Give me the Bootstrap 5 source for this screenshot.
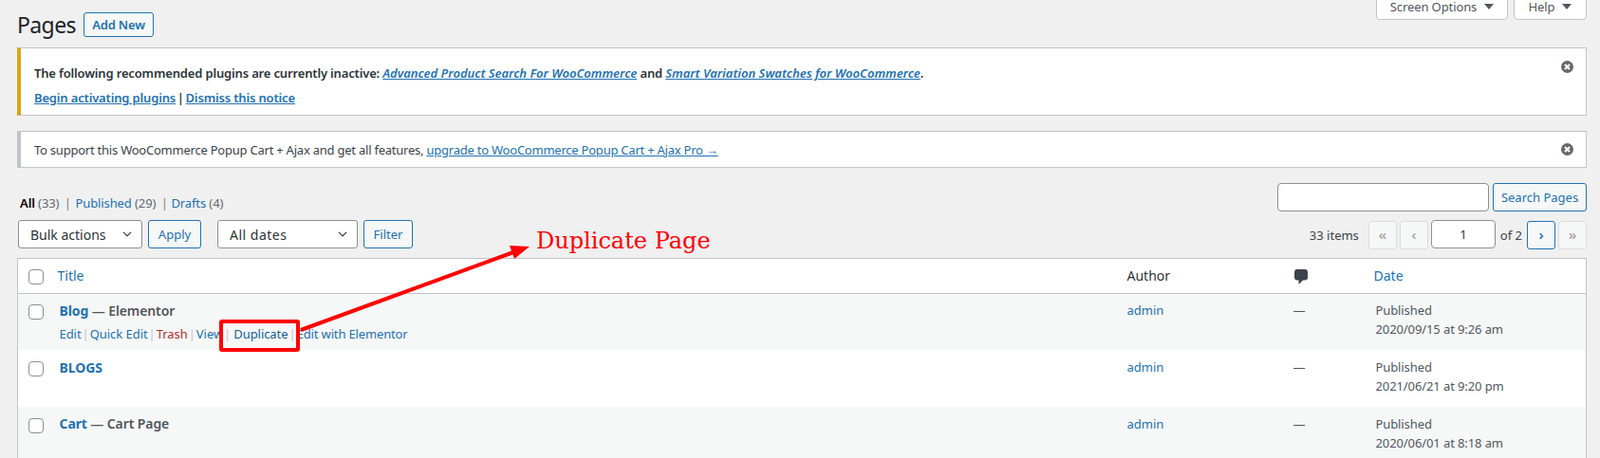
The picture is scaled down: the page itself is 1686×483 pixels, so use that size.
<!DOCTYPE html>
<html lang="en">
<head>
<meta charset="utf-8">
<title>Pages</title>
<link rel="stylesheet" href="https://cdn.jsdelivr.net/npm/bootstrap@5.3.0/dist/css/bootstrap.min.css">
<style>
html,body{height:483px;overflow:hidden}
body{background:#f0f0f1;color:#3c434a;font-family:"Noto Sans",sans-serif;font-size:13px;line-height:20px;position:relative}
a{color:#2271b1;text-decoration:none}
.wp-wrap{padding:0 14px 0 18px;width:1686px}
.wp-head{height:50px;padding-top:13px}
.wp-title{font-size:23px;font-weight:400;line-height:26px;margin:0 10px 0 0;color:#1d2327;width:60px;letter-spacing:-.6px}
.wp-btn{--bs-btn-padding-x:0;--bs-btn-padding-y:0;--bs-btn-font-size:13px;--bs-btn-line-height:28px;--bs-btn-color:#2271b1;--bs-btn-bg:#f6f7f7;--bs-btn-border-color:#2271b1;--bs-btn-border-radius:3px;height:30px;text-align:center}
.wp-add{width:74px;height:26px;line-height:24px;font-weight:600;letter-spacing:-.2px}
.wp-tabs{margin-top:-20px;margin-left:auto}
.wp-tab{background:#fff;border:1px solid #c3c4c7;border-radius:0 0 4px 4px;height:28px;line-height:26px;text-align:center;color:#50575e;letter-spacing:-.1px}
.wp-tab i{display:inline-block;border-left:5px solid transparent;border-right:5px solid transparent;border-top:6px solid #50575e;margin-left:8px;vertical-align:2px}
.wp-tab-a{width:139px}.wp-tab-b{width:77px;margin-left:6px}
.wp-notice{background:#fff;border:1px solid #c3c4c7;border-left-width:4px;padding:0 14px;position:relative}
.wp-n1{height:72px;border-left-color:#dba617;margin-bottom:16px;font-weight:600;padding-top:16px;color:#2c3338;letter-spacing:-.16px}
.wp-n1 p{margin:0 0 6px}
.wp-n1 a{text-decoration:underline}
.wp-n1 em{letter-spacing:0}
.wp-n1 .wp-bar{margin:0 -1.5px}
.wp-n2{height:39px;border-left-color:#c3c4c7;padding-top:9px;margin-bottom:16px;letter-spacing:-.23px}
.wp-n2 a{text-decoration:underline}
.wp-x{position:absolute;right:13px;top:13px;width:13px;height:13px;display:block}
.wp-n2 .wp-x{top:12px}
.wp-search{height:30px;margin-bottom:9px}
.wp-subs{margin:11px 0 0 3px;padding:0;list-style:none;color:#646970;letter-spacing:-.1px}
.wp-subs b{color:#000;font-weight:600}
.wp-subs em{font-style:normal;color:#787c82;margin:0 4.500px 0 5.500px}
.wp-subs li:nth-child(2) em{margin-right:3.500px}
.wp-input{width:223px;height:30px;border:1px solid #8c8f94;border-radius:4px;background:#fff;margin-right:4px;padding:0 8px}
.wp-sbtn{width:99px}
.wp-nav{height:31px;margin-bottom:9px}
.wp-sel{height:30px;padding:1px 24px 0 12px;font-size:14px;line-height:28px;color:#2c3338;border-color:#8c8f94;border-radius:3px;background-position:right 8px center;background-size:14px 10px;font-family:inherit}
.wp-sel-a{width:131px;margin:0 6px 0 1px}
.wp-sel-b{width:148px;margin:0 6px 0 17px;letter-spacing:.5px}
.wp-apply{width:56px}.wp-filter{width:52px}
.wp-count{margin-right:10px;margin-top:1px;line-height:30px}
.wp-pg{width:30px;height:30px;margin-top:1px;line-height:27px;border-radius:3px;border:1px solid #dcdcde;background:#f6f7f7;color:#a7aaad;text-align:center;font-size:15px;font-weight:600}
.wp-pg-on{border-color:#2271b1;color:#2271b1}
.wp-pg+.wp-pg{margin-left:3px}
.wp-page{width:68px;height:30px;border:1px solid #8c8f94;border-radius:4px;text-align:center;margin:0 5px 0 3px;background:#fff;color:#2c3338;font:inherit}
.wp-of{margin-right:5px;margin-top:1px;line-height:30px}
.wp-list{--bs-table-bg:transparent;--bs-table-striped-bg:#f6f7f7;--bs-table-striped-color:#50575e;--bs-table-color:#50575e;table-layout:fixed;width:1654px;margin:0;border:1px solid #c3c4c7;background:#fff;font-size:13px}
.wp-list th,.wp-list td{border:0;font-weight:400;vertical-align:top;box-shadow:none}
.wp-list thead th{height:37px;padding:8px 8px;border-bottom:1px solid #c3c4c7;font-size:14px;color:#2c3338}
.wp-list thead th.wp-ci{padding-left:9px}
.wp-list tbody tr:nth-child(odd) td{background-color:#f6f7f7}
.wp-list tbody td{height:60px;padding:8px 10px}
.wp-list tbody tr:first-child td{height:59px;padding-bottom:0}
.wp-list tbody td.wp-tc{padding:7px 8px 0}
.wp-list tbody td.wp-dc{padding-top:7px;padding-bottom:0;letter-spacing:-.1px}
.wp-list .wp-cbc{padding:11px 0 0 11px}
.wp-list tbody .wp-cbc{padding:11px 0 0 11px}
.wp-list tbody tr+tr td{padding-top:9px}
.wp-list tbody tr+tr td.wp-tc,.wp-list tbody tr+tr td.wp-dc{padding-top:8px}
.wp-list tbody tr+tr td.wp-cbc{padding-top:12px}
.wp-list tbody tr+tr+tr td.wp-tt{padding-top:8px}
.wp-list .form-check-input{width:16px;height:16px;margin:0;border:1px solid #8c8f94;border-radius:4px;display:block}
.wp-ttl{font-size:14px;font-weight:600;letter-spacing:-.1px}
.wp-ttl a{font-weight:700}
.wp-acts{font-size:13px;margin-top:4px;color:#c3c4c7;letter-spacing:-.05px}
.wp-acts span{margin:0 1px}
.wp-acts a.wp-del{color:#b32d2e}
.wp-acts a.wp-dup{color:#135e96;margin-left:2px}
.wp-acts a.wp-ele{letter-spacing:-.15px}
.wp-over{position:absolute;left:0;top:0;pointer-events:none}
.wp-over text{font-family:"DejaVu Serif",serif;font-size:24px;fill:#f00}
</style>
</head>
<body>
<div class="wp-wrap">
  <div class="wp-head d-flex align-items-start">
    <h1 class="wp-title">Pages</h1>
    <a href="#" class="btn wp-btn wp-add">Add New</a>
    <div class="wp-tabs d-flex">
      <div class="wp-tab wp-tab-a">Screen Options<i></i></div>
      <div class="wp-tab wp-tab-b">Help<i></i></div>
    </div>
  </div>

  <div class="wp-notice wp-n1">
    <p>The following recommended plugins are currently inactive: <a href="#"><em>Advanced Product Search For WooCommerce</em></a> and <a href="#"><em>Smart Variation Swatches for WooCommerce</em></a>.</p>
    <p><a href="#">Begin activating plugins</a> <span class="wp-bar">|</span> <a href="#">Dismiss this notice</a></p>
    <svg class="wp-x" viewBox="0 0 13 13" aria-hidden="true"><circle cx="6.5" cy="6.5" r="6.5" fill="#646970"/><path d="M4 4l5 5M9 4l-5 5" stroke="#fff" stroke-width="2.2"/></svg>
  </div>
  <div class="wp-notice wp-n2">
    To support this WooCommerce Popup Cart + Ajax and get all features, <a href="#">upgrade to WooCommerce Popup Cart + Ajax Pro →</a>
    <svg class="wp-x" viewBox="0 0 13 13" aria-hidden="true"><circle cx="6.5" cy="6.5" r="6.5" fill="#646970"/><path d="M4 4l5 5M9 4l-5 5" stroke="#fff" stroke-width="2.2"/></svg>
  </div>

  <div class="wp-search d-flex align-items-start">
    <ul class="wp-subs d-flex">
      <li><b>All</b> (33)<em>|</em></li>
      <li><a href="#">Published</a> (29)<em>|</em></li>
      <li><a href="#">Drafts</a> (4)</li>
    </ul>
    <input class="wp-input ms-auto" type="search" aria-label="Search Pages">
    <a href="#" class="btn wp-btn wp-sbtn">Search Pages</a>
  </div>

  <div class="wp-nav d-flex align-items-start">
    <select class="form-select wp-sel wp-sel-a" aria-label="Bulk actions"><option>Bulk actions</option></select>
    <a href="#" class="btn wp-btn wp-apply">Apply</a>
    <select class="form-select wp-sel wp-sel-b" aria-label="All dates"><option>All dates</option></select>
    <a href="#" class="btn wp-btn wp-filter">Filter</a>
    <span class="wp-count ms-auto">33 items</span>
    <span class="wp-pg">«</span>
    <span class="wp-pg">‹</span>
    <input class="wp-page" type="text" value="1" aria-label="Current page">
    <span class="wp-of">of 2</span>
    <span class="wp-pg wp-pg-on">›</span>
    <span class="wp-pg">»</span>
  </div>

  <table class="table table-striped wp-list">
    <colgroup><col style="width:34px"><col style="width:1127px"><col style="width:175px"><col style="width:85px"><col></colgroup>
    <thead>
      <tr>
        <th class="wp-cbc"><input class="form-check-input" type="checkbox" aria-label="Select all"></th>
        <th><a href="#">Title</a></th>
        <th>Author</th>
        <th class="wp-ci"><svg width="14" height="16" viewBox="0 0 14 16" aria-hidden="true"><path d="M3 0h8a3 3 0 0 1 3 3v5.500a3 3 0 0 1-3 3H9L4.500 16V11.500H3a3 3 0 0 1-3-3V3a3 3 0 0 1 3-3z" fill="#3c434a"/></svg></th>
        <th><a href="#">Date</a></th>
      </tr>
    </thead>
    <tbody>
      <tr>
        <td class="wp-cbc"><input class="form-check-input" type="checkbox" aria-label="Select Blog"></td>
        <td>
          <div class="wp-ttl"><a href="#">Blog</a> — Elementor</div>
          <div class="wp-acts"><a href="#">Edit</a><span>|</span><a href="#">Quick Edit</a><span>|</span><a href="#" class="wp-del">Trash</a><span>|</span><a href="#">View</a><span>|</span><a href="#" class="wp-dup">Duplicate</a><span>|</span><a href="#" class="wp-ele">Edit with Elementor</a></div>
        </td>
        <td class="wp-tc"><a href="#">admin</a></td>
        <td class="wp-tc">—</td>
        <td class="wp-dc">Published<br>2020/09/15 at 9:26 am</td>
      </tr>
      <tr>
        <td class="wp-cbc"><input class="form-check-input" type="checkbox" aria-label="Select BLOGS"></td>
        <td><div class="wp-ttl"><a href="#">BLOGS</a></div></td>
        <td class="wp-tc"><a href="#">admin</a></td>
        <td class="wp-tc">—</td>
        <td class="wp-dc">Published<br>2021/06/21 at 9:20 pm</td>
      </tr>
      <tr>
        <td class="wp-cbc"><input class="form-check-input" type="checkbox" aria-label="Select Cart"></td>
        <td class="wp-tt"><div class="wp-ttl"><a href="#">Cart</a> — Cart Page</div></td>
        <td class="wp-tc"><a href="#">admin</a></td>
        <td class="wp-tc">—</td>
        <td class="wp-dc">Published<br>2020/06/01 at 8:18 am</td>
      </tr>
    </tbody>
  </table>
</div>

<svg class="wp-over" width="1686" height="483" viewBox="0 0 1686 483" aria-hidden="true">
  <rect x="233" y="339" width="81" height="30" rx="1" fill="none" stroke="#f00" stroke-width="4"/>
  <path d="M317 348L541 266" stroke="#f00" stroke-width="4" fill="none"/>
  <path d="M558 260L537 259L542 273Z" fill="#f00"/>
  <text x="565" y="262">Duplicate Page</text>
</svg>
</body>
</html>
